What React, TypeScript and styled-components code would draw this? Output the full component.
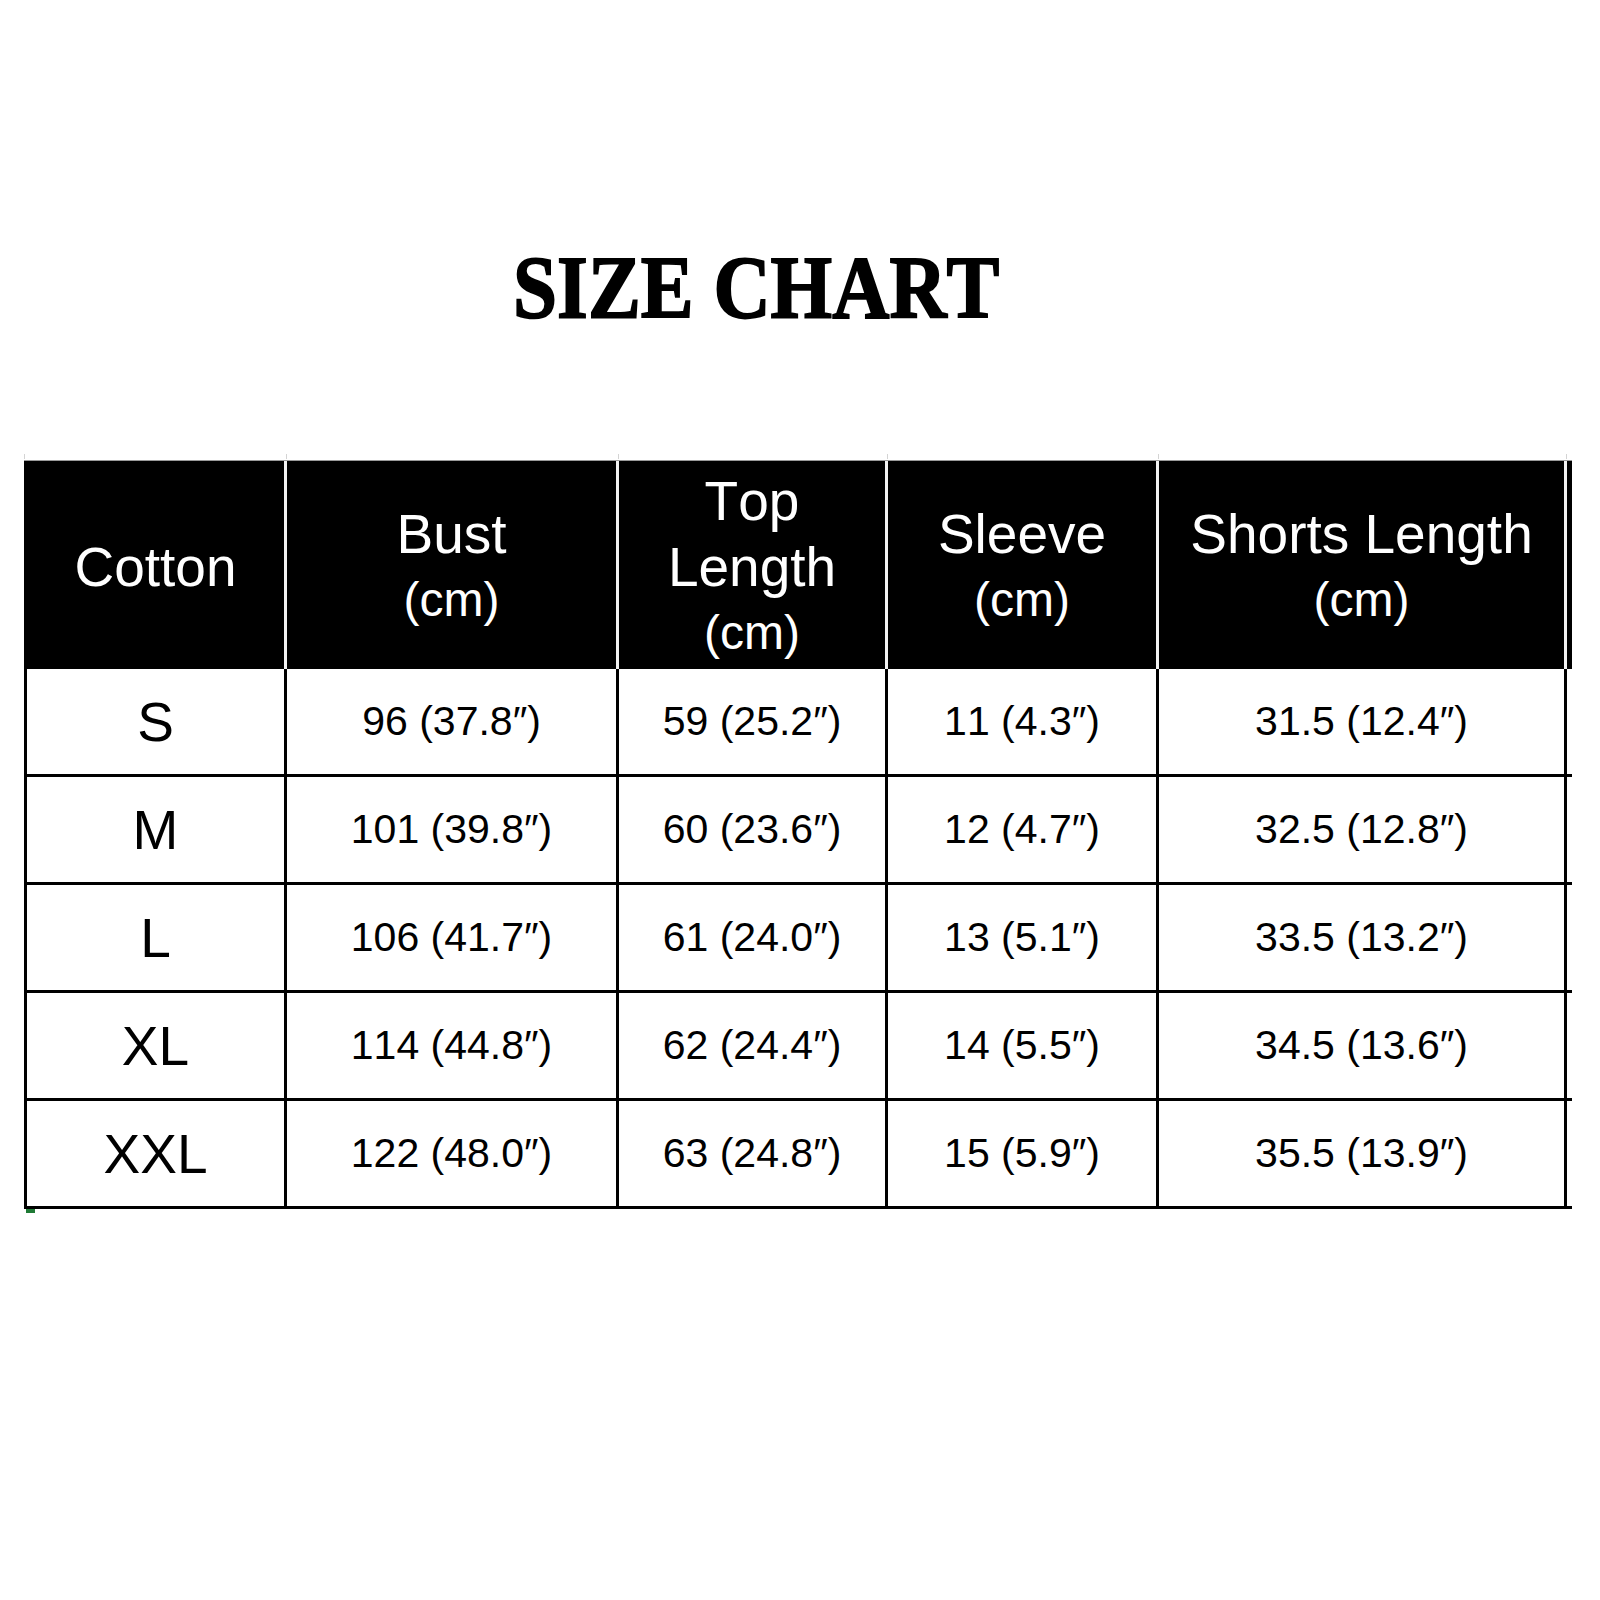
import React from 'react';
import styled, { createGlobalStyle } from 'styled-components';

const GlobalStyle = createGlobalStyle`
  body {
    margin: 0;
    background: #fff;
    font-family: "Liberation Sans", Arial, sans-serif;
    font-kerning: none;
  }
`;

const COLUMNS = '260px 332px 269px 271px 408px 5px';

const Page = styled.div`
  width: 1600px;
  height: 1600px;
  padding-top: 243px;
  box-sizing: border-box;
  background: #fff;
`;

const TitleRow = styled.div`
  padding-right: 88px;
  text-align: center;
  height: 89px;
`;

const Title = styled.h1`
  display: inline-block;
  margin: 0;
  font-family: "Liberation Serif", "Times New Roman", serif;
  font-weight: 700;
  font-size: 89px;
  line-height: 89px;
  color: #000;
  transform: scaleX(0.89);
  -webkit-text-stroke: 1.8px #000;
`;

const TableWrap = styled.div`
  margin: 122px 0 0 24px;
  width: 1548px;
`;

const Ticks = styled.div`
  display: grid;
  grid-template-columns: ${COLUMNS};
  height: 5px;
  padding-left: 3px;
  border-left: 1px solid #d4d4d4;
`;

const Tick = styled.div`
  border-right: 1px solid #d4d4d4;
  margin-right: 1px;
  &:last-child {
    border-right: none;
  }
`;

const TopRule = styled.div`
  height: 1px;
  margin-top: 1px;
  background: #9a9a9a;
`;

const Grid = styled.div`
  display: grid;
  grid-template-columns: ${COLUMNS};
  border-left: 3px solid #000;
`;

const HeadCell = styled.div<{ $last?: boolean }>`
  height: 208px;
  padding-top: 3px;
  background: #000;
  color: #fff;
  display: flex;
  align-items: center;
  justify-content: center;
  text-align: center;
  border-right: ${(p) => (p.$last ? 'none' : '3px solid #f2f2f2')};
  box-sizing: border-box;
`;

const HeadLine = styled.div<{ $unit?: boolean }>`
  font-size: ${(p) => (p.$unit ? '48px' : '55px')};
  line-height: 66px;
  white-space: nowrap;
`;

const Cell = styled.div<{ $size?: boolean; $last?: boolean }>`
  height: 108px;
  display: flex;
  align-items: center;
  justify-content: center;
  color: #000;
  font-size: ${(p) => (p.$size ? '55px' : '41px')};
  border-right: ${(p) => (p.$last ? 'none' : '3px solid #000')};
  border-bottom: 3px solid #000;
  box-sizing: border-box;
  white-space: nowrap;
`;

const Handle = styled.div`
  width: 9px;
  height: 4px;
  margin-left: 2px;
  background: #1f7a35;
`;

const headers: string[][] = [
  ['Cotton'],
  ['Bust', '(cm)'],
  ['Top', 'Length', '(cm)'],
  ['Sleeve', '(cm)'],
  ['Shorts Length', '(cm)'],
];

const rows: string[][] = [
  ['S', '96 (37.8″)', '59 (25.2″)', '11 (4.3″)', '31.5 (12.4″)'],
  ['M', '101 (39.8″)', '60 (23.6″)', '12 (4.7″)', '32.5 (12.8″)'],
  ['L', '106 (41.7″)', '61 (24.0″)', '13 (5.1″)', '33.5 (13.2″)'],
  ['XL', '114 (44.8″)', '62 (24.4″)', '14 (5.5″)', '34.5 (13.6″)'],
  ['XXL', '122 (48.0″)', '63 (24.8″)', '15 (5.9″)', '35.5 (13.9″)'],
];

const App = () => {
  return (
    <>
      <GlobalStyle />
      <Page>
        <TitleRow>
          <Title>SIZE CHART</Title>
        </TitleRow>
        <TableWrap>
          <Ticks>
            {Array.from({ length: 6 }).map((_, i) => (
              <Tick key={i} />
            ))}
          </Ticks>
          <TopRule />
          <Grid>
            {headers.map((lines, i) => (
              <HeadCell key={i}>
                <div>
                  {lines.map((l, j) => (
                    <HeadLine key={j} $unit={l === '(cm)'}>
                      {l}
                    </HeadLine>
                  ))}
                </div>
              </HeadCell>
            ))}
            <HeadCell $last />
            {rows.map((row, r) => (
              <React.Fragment key={r}>
                {row.map((v, c) => (
                  <Cell key={c} $size={c === 0}>
                    {v}
                  </Cell>
                ))}
                <Cell $last />
              </React.Fragment>
            ))}
          </Grid>
          <Handle />
        </TableWrap>
      </Page>
    </>
  );
};

export default App;
